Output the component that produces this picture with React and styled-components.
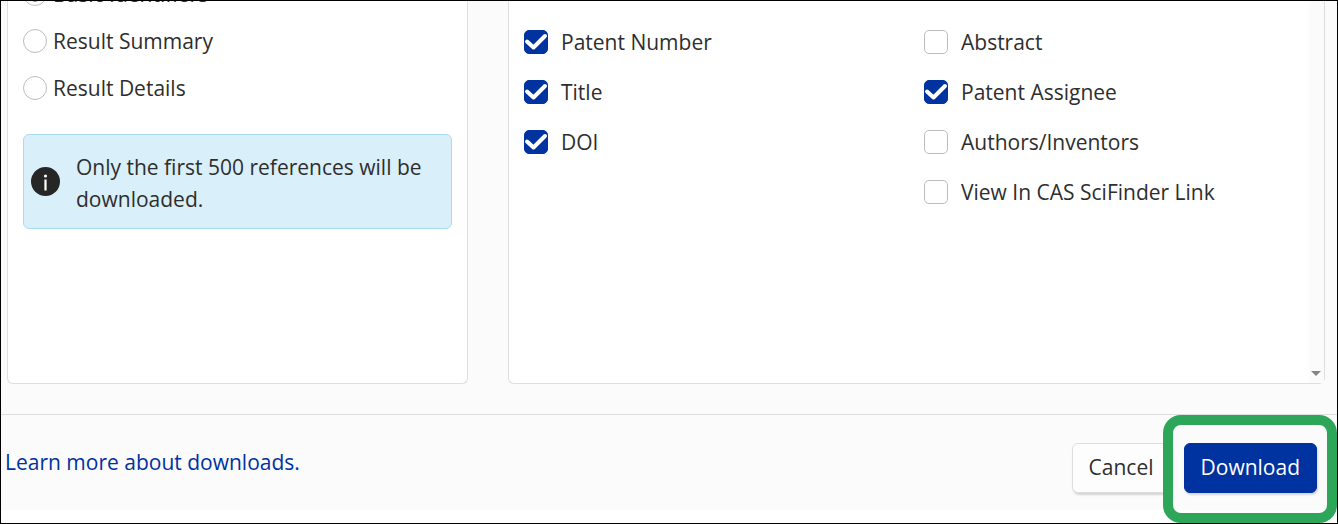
import { useState } from "react";
import styled, { createGlobalStyle } from "styled-components";

const formats = ["Basic Identifiers", "Result Summary", "Result Details"];

const fieldColumns = [
  ["Patent Number", "Title", "DOI"],
  ["Abstract", "Patent Assignee", "Authors/Inventors", "View In CAS SciFinder Link"],
];

export default function App() {
  const [format, setFormat] = useState("Basic Identifiers");
  const [fields, setFields] = useState([
    "Patent Number",
    "Title",
    "DOI",
    "Patent Assignee",
  ]);

  function toggleField(name) {
    setFields(
      fields.includes(name)
        ? fields.filter((field) => field !== name)
        : [...fields, name]
    );
  }

  return (
    <Dialog>
      <GlobalStyle />
      <Content>
        <FormatPanel>
          <FormatList>
            {formats.map((name) => (
              <RadioLabel key={name}>
                <Radio
                  type="radio"
                  name="format"
                  checked={format === name}
                  onChange={() => setFormat(name)}
                />
                {name}
              </RadioLabel>
            ))}
          </FormatList>
          <Notice>
            <InfoIcon viewBox="0 0 29 29" aria-hidden="true">
              <circle cx="14.5" cy="14.5" r="14.5" fill="#262626" />
              <circle cx="14.5" cy="9" r="1.6" fill="#fff" />
              <rect x="13.4" y="12.5" width="2.2" height="11" fill="#fff" />
            </InfoIcon>
            <NoticeText>
              Only the first 500 references will be downloaded.
            </NoticeText>
          </Notice>
        </FormatPanel>
        <FieldPanel>
          <FieldGrid>
            {fieldColumns.map((column) => (
              <FieldColumn key={column[0]}>
                {column.map((name) => (
                  <CheckLabel key={name}>
                    <CheckHolder>
                      <Checkbox
                        type="checkbox"
                        checked={fields.includes(name)}
                        onChange={() => toggleField(name)}
                      />
                      {fields.includes(name) && (
                        <CheckMark viewBox="0 0 24 24" aria-hidden="true">
                          <path d="M3 11.5 L9.5 17.5 L21 6" />
                        </CheckMark>
                      )}
                    </CheckHolder>
                    {name}
                  </CheckLabel>
                ))}
              </FieldColumn>
            ))}
          </FieldGrid>
          <ScrollTrack>
            <svg width="10" height="5" viewBox="0 0 10 5" aria-hidden="true">
              <path d="M0 0 H10 L5 5 Z" fill="#858585" />
            </svg>
          </ScrollTrack>
        </FieldPanel>
      </Content>
      <Footer>
        <LearnMore href="#downloads">Learn more about downloads.</LearnMore>
        <Actions>
          <Button type="button">Cancel</Button>
          <Highlight>
            <Button type="button" $primary>
              Download
            </Button>
          </Highlight>
        </Actions>
      </Footer>
    </Dialog>
  );
}

const GlobalStyle = createGlobalStyle`
  * {
    box-sizing: border-box;
  }

  body {
    margin: 0;
    color: #2e2e2e;
    background-color: #fff;
    font-family: "Open Sans", sans-serif;
    font-size: 21px;
    line-height: 32px;
  }
`;

const Dialog = styled.main`
  display: flex;
  flex-direction: column;
  min-height: 100vh;
  padding-bottom: 13px;
  border: 1px solid #000;
  overflow: hidden;
`;

const Content = styled.div`
  display: flex;
  flex: 1;
  gap: 40px;
  padding: 0 12px 30px 6px;
  background-color: #fbfbfb;
`;

const Panel = styled.section`
  background-color: #fff;
  border: 1px solid #dedede;
  border-top: none;
  border-radius: 0 0 6px 6px;
`;

const FormatPanel = styled(Panel)`
  flex: 0 1 461px;
  padding: 0 15px 15px;
`;

/* scrolled a little, so the first option is cut by the top edge */
const FormatList = styled.div`
  display: flex;
  flex-direction: column;
  margin-top: -31px;
  margin-bottom: 23px;
`;

const RadioLabel = styled.label`
  display: flex;
  align-items: center;
  gap: 6px;
  height: 47px;
`;

const Radio = styled.input`
  appearance: none;
  flex: none;
  width: 24px;
  height: 24px;
  margin: 0;
  border: 1px solid #bdbdbd;
  border-radius: 50%;
  background-color: #fff;

  &:checked {
    background-image: radial-gradient(circle, #0032a0 7px, transparent 8px);
  }
`;

const Notice = styled.div`
  display: flex;
  align-items: center;
  gap: 16px;
  padding: 7px;
  border: 1px solid #a9dcf1;
  border-radius: 6px;
  background-color: #d9effa;
`;

const InfoIcon = styled.svg`
  flex: none;
  width: 29px;
  height: 29px;
`;

const NoticeText = styled.p`
  margin: 0;
  padding: 9px 0 6px;
`;

const FieldPanel = styled(Panel)`
  display: flex;
  flex: 1;
`;

const FieldGrid = styled.div`
  display: grid;
  flex: 1;
  grid-template-columns: 1fr 1fr;
  padding-top: 16px;
`;

const FieldColumn = styled.div`
  padding-left: 15px;
`;

const CheckLabel = styled.label`
  display: flex;
  align-items: center;
  gap: 13px;
  height: 50px;
`;

const CheckHolder = styled.span`
  display: grid;
  position: relative;
`;

const Checkbox = styled.input`
  appearance: none;
  width: 24px;
  height: 24px;
  margin: 0;
  border: 1px solid #bdbdbd;
  border-radius: 5px;
  background-color: #fff;

  &:checked {
    border-color: #0032a0;
    background-color: #0032a0;
  }
`;

const CheckMark = styled.svg`
  position: absolute;
  inset: 0;
  pointer-events: none;
  fill: none;
  stroke: #fff;
  stroke-width: 4;
  stroke-linecap: round;
  stroke-linejoin: round;
`;

const ScrollTrack = styled.div`
  display: flex;
  align-items: flex-end;
  justify-content: center;
  width: 15px;
  padding-right: 1px;
  padding-bottom: 7px;
  background-color: #fbfbfb;
`;

const Footer = styled.footer`
  display: flex;
  align-items: center;
  justify-content: space-between;
  padding: 28px 20px 17px 4px;
  border-top: 1px solid #dedede;
  background-color: #fbfbfb;
`;

const LearnMore = styled.a`
  align-self: flex-start;
  line-height: 38px;
  color: #0032a0;
  text-decoration: none;
`;

const Actions = styled.div`
  display: flex;
  gap: 13px;
`;

const Button = styled.button`
  height: 50px;
  padding: 0 16px 2px;
  border: 1px solid ${(props) => (props.$primary ? "#0032a0" : "#dedede")};
  border-radius: 6px;
  color: ${(props) => (props.$primary ? "#fff" : "#2e2e2e")};
  background-color: ${(props) => (props.$primary ? "#0032a0" : "#fdfdfd")};
  box-shadow: 1px 2px 2px rgba(0, 0, 0, 0.15);
  font: inherit;
`;

const Highlight = styled.div`
  position: relative;

  &::after {
    content: "";
    position: absolute;
    inset: -28px -20px -30px -21px;
    border: 10px solid #2ea65a;
    border-radius: 18px;
    pointer-events: none;
  }
`;
